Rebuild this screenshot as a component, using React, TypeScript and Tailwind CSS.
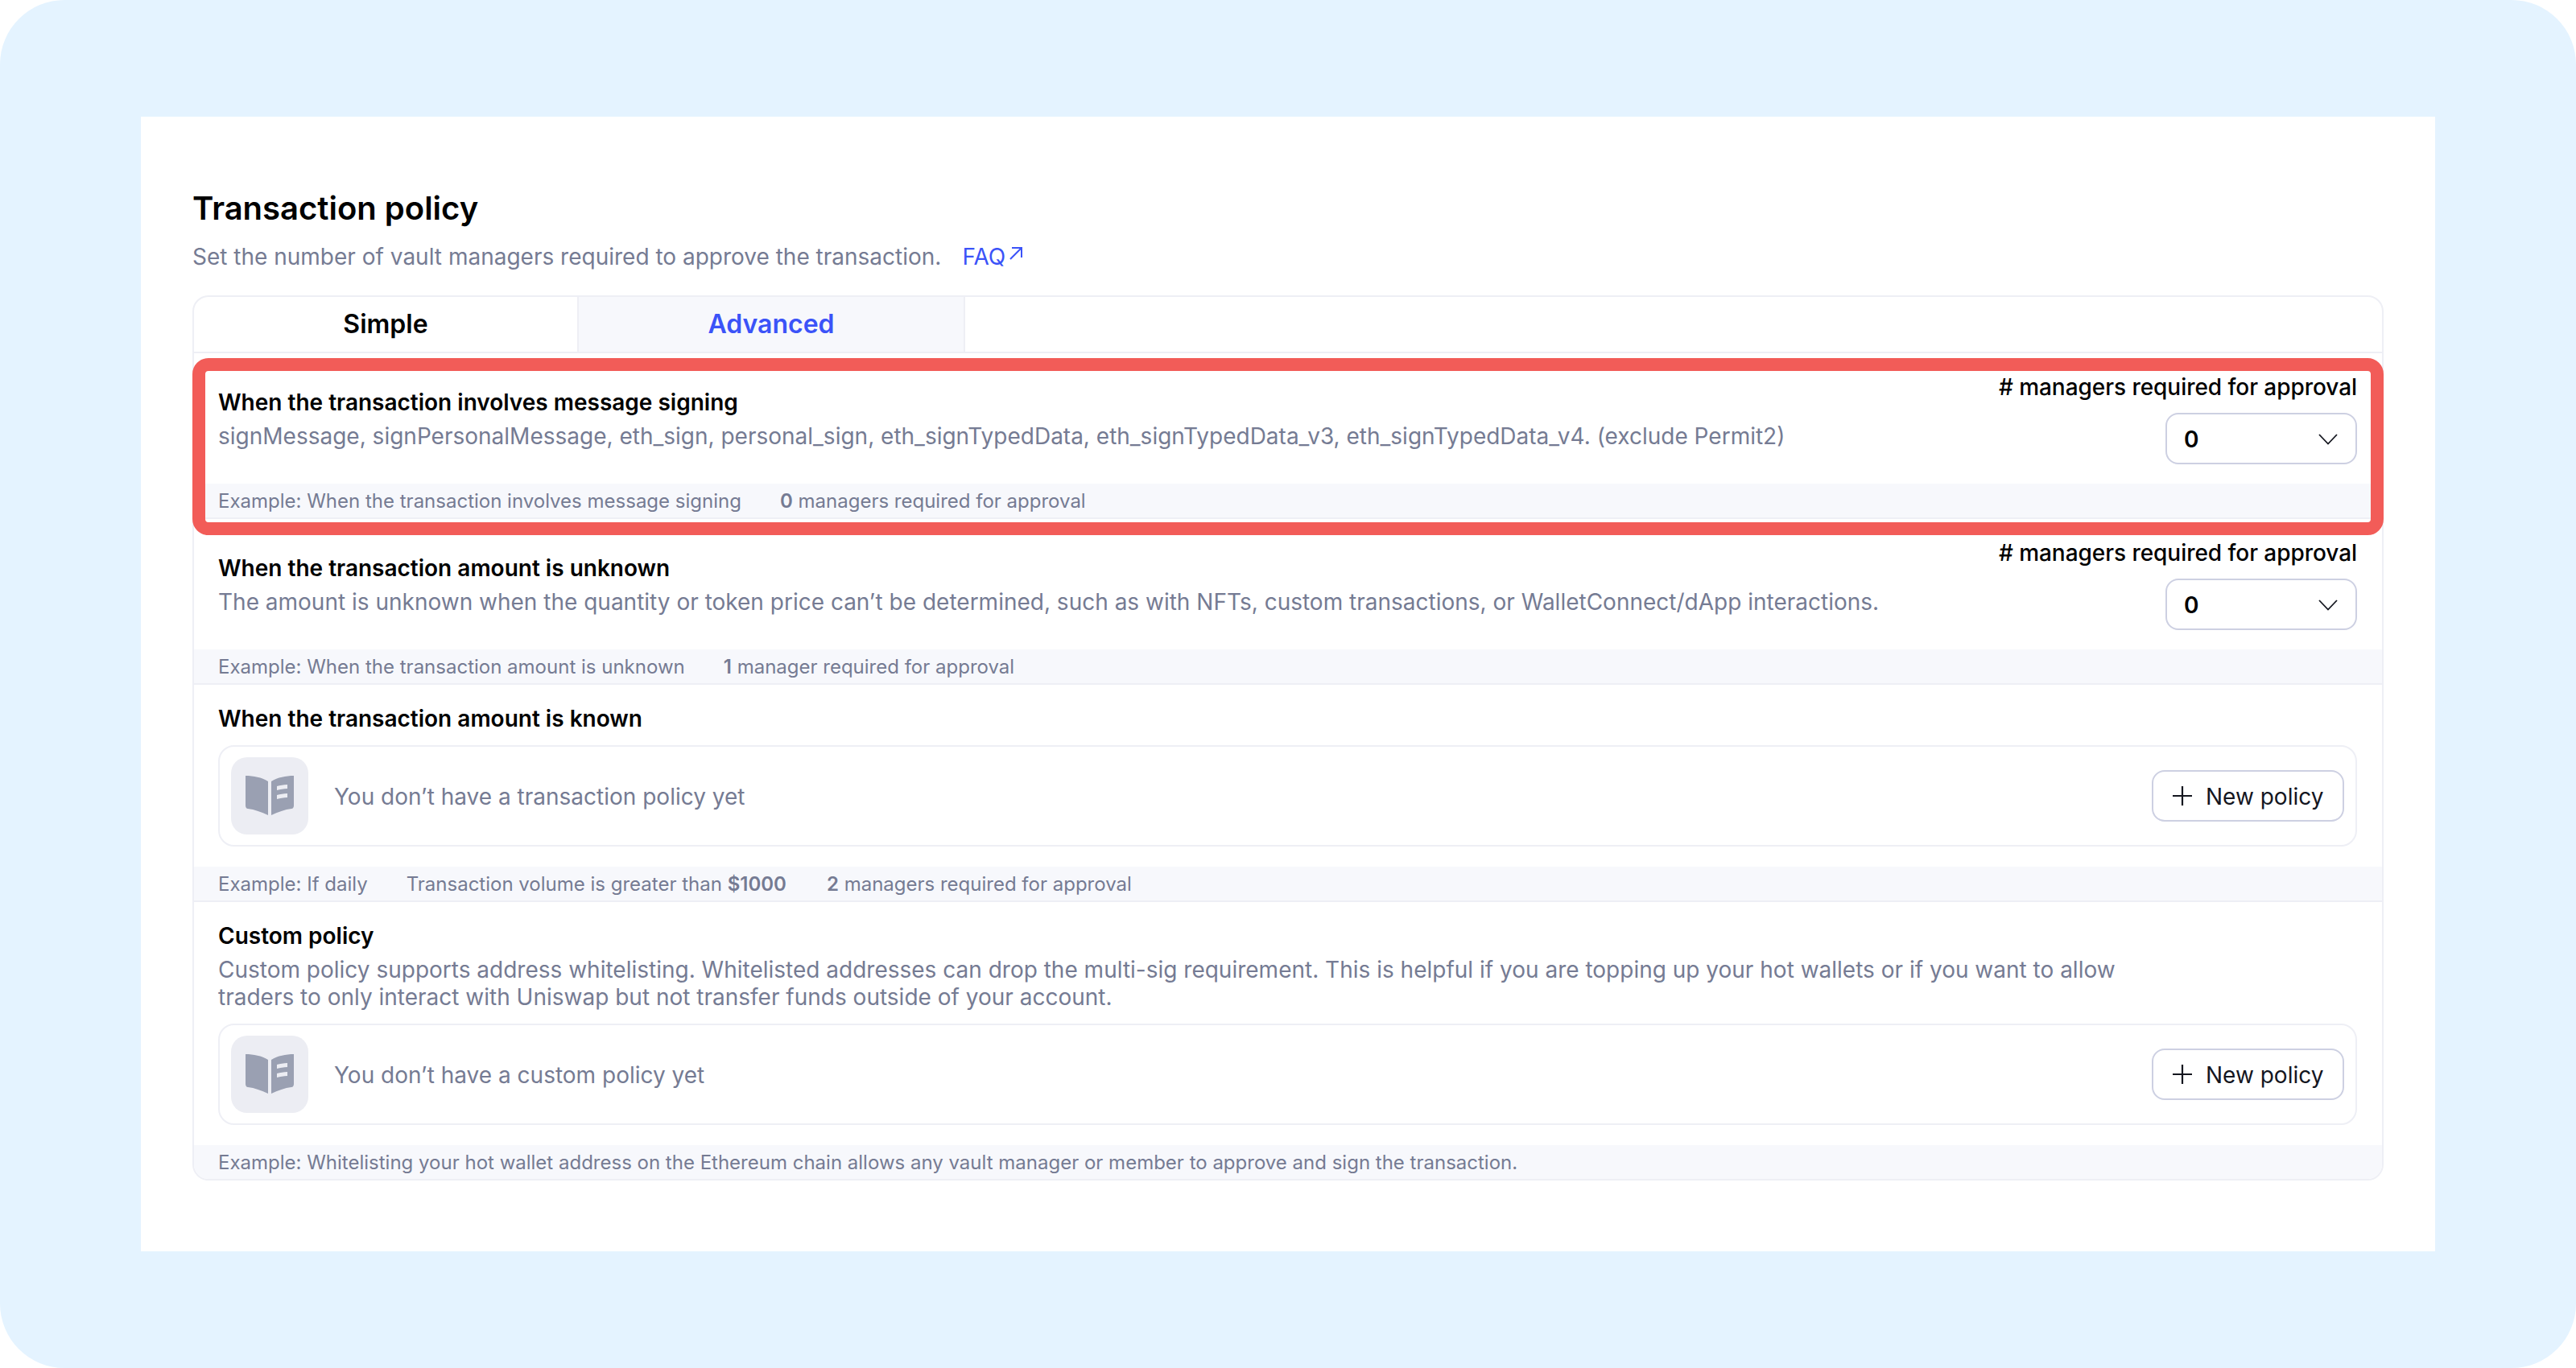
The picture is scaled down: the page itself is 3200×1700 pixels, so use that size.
// Transaction policy screen: advanced tab with its four approval rows.

const rowTitle = "text-[28px] leading-[34px] font-semibold text-black"
const rowText = "text-[28px] leading-[34px] text-[#757b93]"

function Chevron() {
  return (
    <svg width="24" height="14" viewBox="0 0 24 14" fill="none" stroke="#14161f" strokeWidth="1.800">
      <path d="M1 1l11 11.500L23 1" />
    </svg>
  )
}

function BookIcon() {
  return (
    <svg width="96" height="96" viewBox="0 0 96 96" fill="#9aa0b2">
      <path d="M18 23c10 0 20 2 28 7v42c-8-4-17-7-25-8-2 0-3-2-3-4z" />
      <path d="M78 23c-10 0-20 2-28 7v42c8-4 17-7 25-8 2 0 3-2 3-4z" />
      <path d="M57 36c4-1 8-2 13-2v5c-5 0-9 1-13 2zM57 47c4-1 8-2 13-2v5c-5 0-9 1-13 2z" fill="#ecedf3" />
    </svg>
  )
}

function Footer({ children }: { children: React.ReactNode }) {
  return (
    <div className="flex h-[44px] items-center gap-12 border-b-2 border-[#eeeff5] bg-[#f7f8fc] pt-[2px] pr-[31px] pl-[30px] text-[24px] leading-[30px] text-[#757b93]">
      {children}
    </div>
  )
}

function ManagerRow({ title, desc, example, count }: { title: string; desc: string; example: string; count: React.ReactNode }) {
  return (
    <div>
      <div className="flex h-[162px] justify-between pr-[31px] pl-[30px]">
        <div className="pt-[44px]">
          <div className={rowTitle}>{title}</div>
          <div className={`${rowText} mt-2 whitespace-nowrap`}>{desc}</div>
        </div>
        <div className="flex flex-col items-end pt-[25px]">
          <div className="text-[28px] leading-[34px] font-medium tracking-[-0.05px] whitespace-nowrap text-black"># managers required for approval</div>
          <div className="mt-[15px] flex h-[64px] w-[238px] items-center justify-between rounded-[16px] border-2 border-[#cdd0e2] bg-white pt-[2px] pr-[22px] pl-[21px]">
            <span className="text-[28px] font-semibold text-black">0</span>
            <Chevron />
          </div>
        </div>
      </div>
      <Footer>
        <span>{example}</span>
        <span>{count}</span>
      </Footer>
    </div>
  )
}

function EmptyPolicy({ label }: { label: string }) {
  return (
    <div className="flex h-[126px] items-center justify-between rounded-[20px] border-2 border-[#eeeff5] bg-white px-[14px]">
      <div className="flex items-center gap-8">
        <div className="flex h-[96px] w-[96px] items-center justify-center rounded-[20px] bg-[#ecedf3]">
          <BookIcon />
        </div>
        <span className={`${rowText} pt-[2px]`}>{label}</span>
      </div>
      <button className="flex h-[64px] w-[239px] items-center gap-[17px] rounded-[16px] border-2 border-[#cdd0e2] bg-white pl-[24px] text-[28px] text-[#14161f]">
        <svg width="24" height="24" viewBox="0 0 24 24" stroke="#14161f" strokeWidth="2.200">
          <path d="M12 0v24M0 12h24" />
        </svg>
        <span className="pt-[2px]">New policy</span>
      </button>
    </div>
  )
}

export default function App() {
  return (
    <div className="h-[1700px] w-[3200px] bg-white font-['Inter',sans-serif]">
      <div className="h-full rounded-[80px] bg-[#e4f3ff] pt-[145px] pl-[175px]">
        <div className="h-[1410px] w-[2850px] bg-white px-[64px] pt-[90px]">
          <h1 className="text-[40px] leading-[48px] font-semibold text-black">Transaction policy</h1>
          <p className="mt-4 flex items-center text-[28px] leading-[40px] text-[#757b93]">
            Set the number of vault managers required to approve the transaction.
            <span className="ml-[26px] flex items-center text-[#3b53f8]">
              FAQ
              <svg className="mb-2 ml-[4px]" width="18" height="18" viewBox="0 0 18 18" fill="none" stroke="#3b53f8" strokeWidth="2">
                <path d="M2 16L16 2M4 2h12v12" />
              </svg>
            </span>
          </p>

          <div className="mt-[28px] w-[2722px] overflow-hidden rounded-[20px] border-2 border-[#eeeff5]">
            <div className="flex h-[70px] border-b-2 border-[#eeeff5] text-[32px] font-semibold">
              <div className="flex w-[478px] items-center justify-center border-r-2 border-[#eeeff5] text-black">Simple</div>
              <div className="flex w-[480px] items-center justify-center border-r-2 border-[#eeeff5] bg-[#f7f8fc] text-[#3b53f8]">Advanced</div>
            </div>

            <ManagerRow
              title="When the transaction involves message signing"
              desc="signMessage, signPersonalMessage, eth_sign, personal_sign, eth_signTypedData, eth_signTypedData_v3, eth_signTypedData_v4. (exclude Permit2)"
              example="Example: When the transaction involves message signing"
              count={<><b className="font-semibold">0</b> managers required for approval</>}
            />
            <ManagerRow
              title="When the transaction amount is unknown"
              desc="The amount is unknown when the quantity or token price can’t be determined, such as with NFTs, custom transactions, or WalletConnect/dApp interactions."
              example="Example: When the transaction amount is unknown"
              count={<><b className="font-semibold">1</b> manager required for approval</>}
            />

            <div className="pt-[25px] pr-[31px] pb-[25px] pl-[30px]">
              <div className={rowTitle}>When the transaction amount is known</div>
              <div className="mt-[16px]">
                <EmptyPolicy label="You don’t have a transaction policy yet" />
              </div>
            </div>
            <Footer>
              <span>Example: If daily</span>
              <span>Transaction volume is greater than <b className="font-semibold">$1000</b></span>
              <span className="pl-[2px]"><b className="font-semibold">2</b> managers required for approval</span>
            </Footer>

            <div className="pt-[25px] pr-[31px] pb-[25px] pl-[30px]">
              <div className={rowTitle}>Custom policy</div>
              <div className={`${rowText} mt-2 w-[2400px]`}>
                Custom policy supports address whitelisting. Whitelisted addresses can drop the multi-sig requirement. This is helpful if you are topping up your hot wallets or if you want to allow traders to only interact with Uniswap but not transfer funds outside of your account.
              </div>
              <div className="mt-[16px]">
                <EmptyPolicy label="You don’t have a custom policy yet" />
              </div>
            </div>
            <div className="flex h-[42px] items-center bg-[#f7f8fc] pt-[2px] pr-[31px] pl-[30px] text-[24px] leading-[30px] text-[#757b93]">
              Example: Whitelisting your hot wallet address on the Ethereum chain allows any vault manager or member to approve and sign the transaction.
            </div>
          </div>
        </div>
      </div>
      {/* red callout lying over the first row */}
      <div className="pointer-events-none absolute top-[445px] left-[239px] h-[220px] w-[2722px] rounded-[20px] border-[16px] border-[#f25c58]" />
    </div>
  )
}
